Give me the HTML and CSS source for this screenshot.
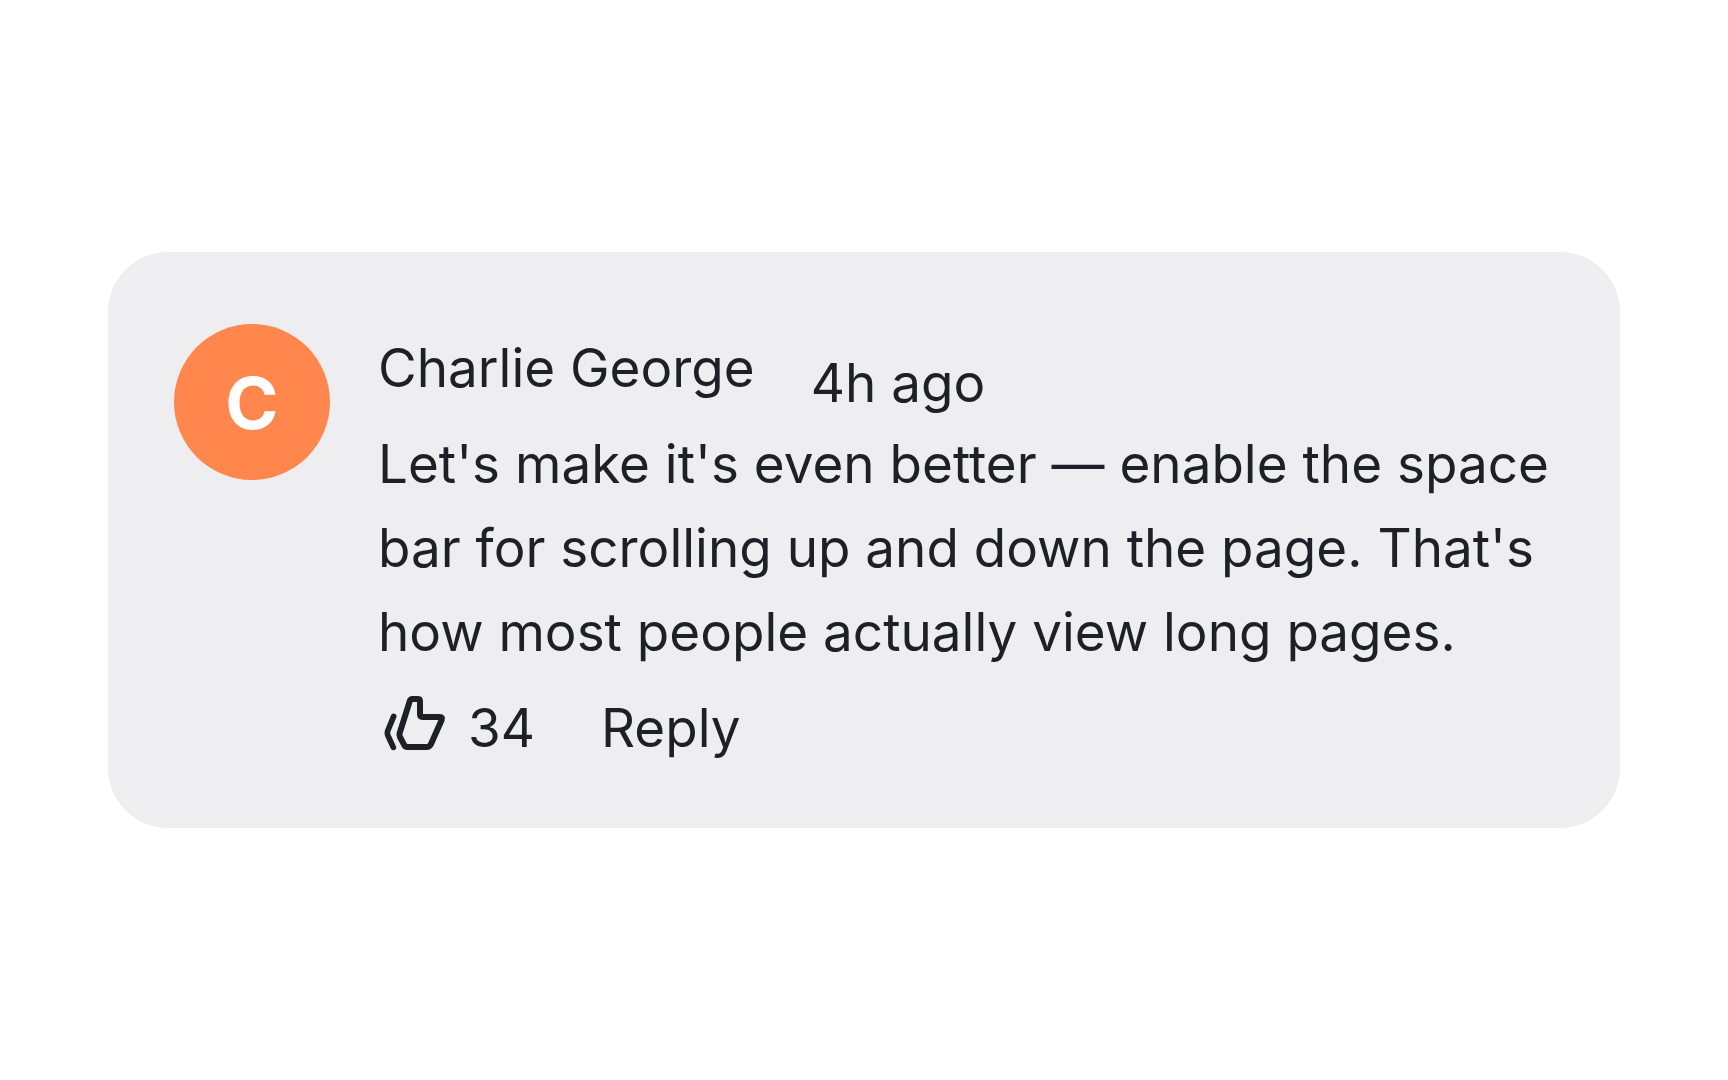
FILE: index.html
```
<!DOCTYPE html>
<html lang="en">
<head>
    <meta charset="UTF-8">
    <meta name="viewport" content="width=device-width, initial-scale=1.0">
    <title>Comment</title>
    <link rel="stylesheet" href="styles.css">
</head>
<body>
    <main>
        <article class="comment">
            <div class="avatar">C</div>
            <div class="content">
                <header class="top">
                    <h2 class="name">Charlie George</h2>
                    <time class="time">4h ago</time>
                </header>
                <p class="text">Let's make it's even better — enable the space bar for scrolling up and down the page. That's how most people actually view long pages.</p>
                <div class="actions">
                    <button class="like" type="button">
                        <svg class="thumb" viewBox="24 36 216 216" aria-hidden="true">
                            <path d="M127 57H143Q150 57 150 64V103Q150 111 158 111H209Q219 111 215 120L183 192Q179 201 170 201H113Q106 201 102 194L90 171Q87 165 89 159L119 64Q121 57 127 57Z" stroke-width="18"/>
                            <path d="M71 109L53 153Q51 159 53 165L70 202" stroke-width="17"/>
                        </svg>
                        34
                    </button>
                    <button class="reply" type="button">Reply</button>
                </div>
            </div>
        </article>
    </main>
</body>
</html>
```
FILE: styles.css
```
body{
    margin: 0;
    background-color: #ffffff;
    color: #1f2027;
    font-family: Inter, sans-serif;
    font-size: 53px;
}

main{
    display: flex;
    align-items: center;
    justify-content: center;
    min-height: 100vh;
}

.comment{
    display: flex;
    align-items: flex-start;
    gap: 48px;
    box-sizing: border-box;
    width: 87.5%;
    padding: 72px 60px 58px 66px;
    border-radius: 60px;
    background-color: #eeeef0;
}

.avatar{
    display: flex;
    flex-shrink: 0;
    align-items: center;
    justify-content: center;
    width: 156px;
    height: 156px;
    border-radius: 50%;
    background-color: #ff864c;
    color: white;
    font-size: 72px;
    font-weight: 700;
}

.content{
    flex: 1;
    padding-top: 11px;
}

/* the time sits a bit lower than the name */
.top{
    display: flex;
    align-items: flex-end;
    gap: 56px;
    margin-bottom: 6px;
    line-height: 66px;
}

.name{
    margin: 0;
    padding-bottom: 15px;
    font-size: 53px;
    font-weight: 400;
}

.text{
    margin: 0;
    line-height: 84px;
}

.actions{
    display: flex;
    gap: 66px;
    margin-top: 12px;
}

.actions button{
    display: flex;
    align-items: center;
    gap: 18px;
    padding: 0;
    border: none;
    background: none;
    color: inherit;
    font: inherit;
    line-height: 84px;
    cursor: pointer;
}

.thumb{
    width: 72px;
    height: 72px;
    fill: none;
    stroke: currentColor;
    stroke-linecap: round;
    stroke-linejoin: round;
}
```
